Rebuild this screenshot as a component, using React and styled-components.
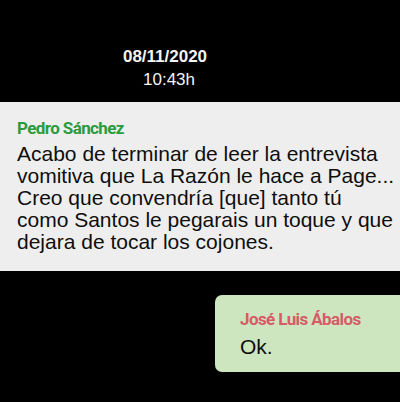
import React from "react";
import styled, { createGlobalStyle } from "styled-components";

const GlobalStyle = createGlobalStyle`
  html, body {
    margin: 0;
    padding: 0;
    background: #000;
  }
  body {
    width: 400px;
    height: 402px;
    overflow: hidden;
  }
`;

const Screen = styled.div`
  width: 400px;
  height: 402px;
  background: #000;
  display: flex;
  flex-direction: column;
  overflow: hidden;
`;

const Stamp = styled.div`
  padding-top: 45px;
  width: 330px;
  text-align: center;
  color: #f4f4f4;
  font-family: "Liberation Sans", Arial, sans-serif;
  font-size: 17px;
  line-height: 23px;
`;

const StampDate = styled.div`
  font-weight: bold;
`;

const StampTime = styled.div`
  padding-left: 8px;
`;

const Bubble = styled.div`
  align-self: ${(p) => (p.$mine ? "flex-end" : "flex-start")};
  margin: ${(p) => (p.$mine ? "24px -8px 0 0" : "11px 0 0 -8px")};
  width: ${(p) => (p.$mine ? "193px" : "416px")};
  background: ${(p) => (p.$mine ? "#cde6bf" : "#eeeeee")};
  border-radius: 7px;
  padding: ${(p) => (p.$mine ? "14px 0 14px 25px" : "16px 0 18px 25px")};
  box-sizing: border-box;
`;

const Sender = styled.div`
  font-family: Roboto, "Liberation Sans", sans-serif;
  font-weight: bold;
  font-size: 17px;
  letter-spacing: -0.6px;
  line-height: 20px;
  color: ${(p) => p.color};
`;

const Body = styled.div`
  font-family: "Liberation Sans", Arial, sans-serif;
  font-size: 21px;
  line-height: 22px;
  color: #0e0e0e;
  white-space: pre;
  margin-top: ${(p) => p.$gap || 5}px;
`;

export default function App() {
  return (
    <Screen>
      <GlobalStyle />
      <Stamp>
        <StampDate>08/11/2020</StampDate>
        <StampTime>10:43h</StampTime>
      </Stamp>
      <Bubble>
        <Sender color="#2b9b3c">Pedro Sánchez</Sender>
        <Body>
          {"Acabo de terminar de leer la entrevista\nvomitiva que La Razón le hace a Page...\nCreo que convendría [que] tanto tú\ncomo Santos le pegarais un toque y que\ndejara de tocar los cojones."}
        </Body>
      </Bubble>
      <Bubble $mine>
        <Sender color="#d65b67">José Luis Ábalos</Sender>
        <Body $gap={7}>Ok.</Body>
      </Bubble>
    </Screen>
  );
}
